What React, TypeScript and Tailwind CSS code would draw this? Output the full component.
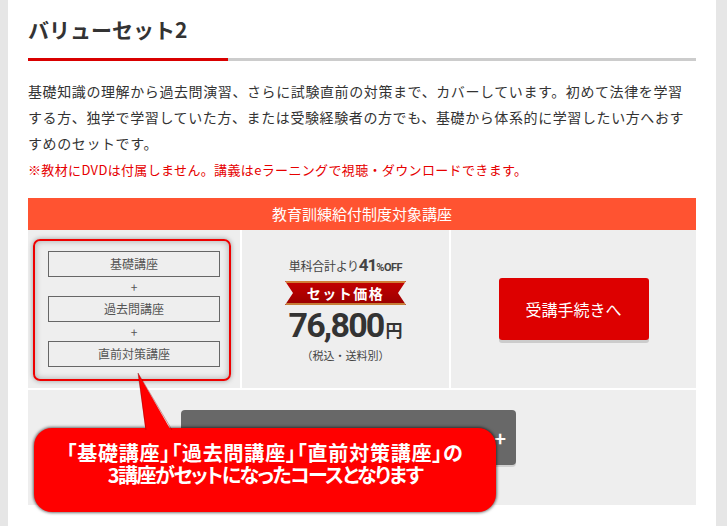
import React from "react";

function Ribbon() {
  return (
    <div className="relative h-[24px] w-[121px]">
      <svg width="121" height="24" viewBox="0 0 121 24" className="absolute inset-0">
        <defs>
          <linearGradient id="rg" x1="0" y1="0" x2="0" y2="1">
            <stop offset="0" stopColor="#c40000" />
            <stop offset="0.5" stopColor="#b00000" />
            <stop offset="1" stopColor="#980000" />
          </linearGradient>
        </defs>
        <polygon points="0,0 121,0 113,12 121,24 0,24 8,12" fill="url(#rg)" />
        <line x1="1" y1="1" x2="120" y2="1" stroke="#d6a84a" strokeWidth="1.5" />
        <line x1="1" y1="23" x2="120" y2="23" stroke="#d6a84a" strokeWidth="1.5" />
      </svg>
      <div className="absolute inset-0 flex items-center justify-center text-[14px] font-bold leading-none tracking-[1.5px] text-white">
        セット価格
      </div>
    </div>
  );
}

export default function App() {
  return (
    <div className="relative flex h-[526px] w-[727px] overflow-hidden bg-[#e6e6e6] font-['Noto_Sans_CJK_JP','Noto_Sans',sans-serif] text-[#333]">
      <div className="ml-[8px] w-[708px] bg-white px-[20px]">
        <h1 className="pt-[14px] text-[21px] font-bold leading-[30px] text-[#333]">バリューセット2</h1>
        <div className="mt-[14px] flex h-[3px]">
          <div className="w-[200px] bg-[#d90000]" />
          <div className="flex-1 bg-[#cccccc]" />
        </div>
        <p className="mt-[17px] text-[14px] leading-[26px] tracking-[0.6px] text-[#333]">
          基礎知識の理解から過去問演習、さらに試験直前の対策まで、カバーしています。初めて法律を学習する方、独学で学習していた方、または受験経験者の方でも、基礎から体系的に学習したい方へおすすめのセットです。
        </p>
        <p className="mt-[4px] text-[13px] leading-[20px] tracking-[0.35px] text-[#e60000]">
          ※教材にDVDは付属しません。講義はeラーニングで視聴・ダウンロードできます。
        </p>

        <div className="mt-[18px]">
          <div className="flex h-[32px] items-center justify-center bg-[#ff5331] text-[15px] text-white">
            教育訓練給付制度対象講座
          </div>
          <div className="grid h-[158px] grid-cols-[212px_207px_245px] gap-x-[2px]">
            <div className="bg-[#eeeeee] pl-[5px] pt-[9px]">
              <div className="h-[142px] w-[198px] rounded-[7px] border-2 border-[#ee0000] pl-[13px] pr-[9px] pt-[10px] shadow-[0_0_5px_rgba(0,0,0,0.35),inset_0_0_6px_rgba(0,0,0,0.3)]">
                <div className="flex h-[26px] items-center justify-center border border-[#666] text-[12px] text-[#555]">基礎講座</div>
                <div className="flex h-[19px] items-center justify-center text-[12px] text-[#555]">+</div>
                <div className="flex h-[26px] items-center justify-center border border-[#666] text-[12px] text-[#555]">過去問講座</div>
                <div className="flex h-[19px] items-center justify-center text-[12px] text-[#555]">+</div>
                <div className="flex h-[26px] items-center justify-center border border-[#666] text-[12px] text-[#555]">直前対策講座</div>
              </div>
            </div>
            <div className="flex flex-col items-center bg-[#eeeeee] pt-[23px]">
              <div className="flex h-[20px] items-baseline text-[#444]">
                <span className="text-[12px] tracking-[-0.3px]">単科合計より</span>
                <span className="font-['Roboto',sans-serif] text-[17px] font-bold tracking-[-1px]">41</span>
                <span className="font-['Roboto',sans-serif] text-[11px] font-bold tracking-[-0.5px]">%OFF</span>
              </div>
              <div className="mt-[8px]">
                <Ribbon />
              </div>
              <div className="mt-[2px] flex h-[36px] items-baseline">
                <span className="font-['Roboto',sans-serif] text-[34px] font-bold leading-[36px] tracking-[-1.8px] text-[#333]">76,800</span>
                <span className="ml-[2px] text-[17px] font-bold text-[#333]">円</span>
              </div>
              <div className="mt-[4px] text-[11px] leading-[16px] text-[#444]">（税込・送料別）</div>
            </div>
            <div className="flex items-center justify-center bg-[#eeeeee]">
              <div className="flex h-[62px] w-[150px] items-center justify-center rounded-[3px] bg-[#dd0000] text-[16px] text-white shadow-[0_3px_0_#cccccc]">
                受講手続きへ
              </div>
            </div>
          </div>
          <div className="mt-[2px] h-[115px] bg-[#eeeeee] pl-[153px] pt-[20px]">
            <div className="flex h-[55px] w-[335px] items-center justify-end rounded-[4px] bg-[#686868] pr-[10px] text-[20px] font-bold text-white shadow-[0_2px_0_#d0d0d0]">
              +
            </div>
          </div>
        </div>
      </div>
      <div className="absolute left-[34px] top-[428px] h-[84px] w-[462px] rounded-[18px] bg-[#ff0000] pt-[14px] text-center text-[20px] font-bold leading-[22px] text-white shadow-[0_0_3px_1px_rgba(0,0,0,0.55)] [font-feature-settings:'palt']">
        <div className="tracking-[0.8px]">「基礎講座」「過去問講座」「直前対策講座」の</div>
        <div className="tracking-[-1.5px]">3講座がセットになったコースとなります</div>
      </div>
      <svg className="absolute left-[130px] top-[370px]" width="50" height="64" viewBox="0 0 50 64">
        <polygon points="8,3 16,64 43,64" fill="#ff0000" />
        <polyline points="16,60 8,3 42,60" fill="none" stroke="rgba(120,0,0,0.35)" strokeWidth="1" />
      </svg>
    </div>
  );
}
